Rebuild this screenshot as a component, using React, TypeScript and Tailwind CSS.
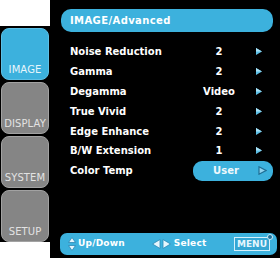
const ROWS = [
  { label: 'Noise Reduction', value: '2' },
  { label: 'Gamma', value: '2' },
  { label: 'Degamma', value: 'Video' },
  { label: 'True Vivid', value: '2' },
  { label: 'Edge Enhance', value: '2' },
  { label: 'B/W Extension', value: '1' },
]

const TABS = ['IMAGE', 'DISPLAY', 'SYSTEM', 'SETUP']

const FONT = "font-['DejaVu_Sans',Verdana,sans-serif]"

function Arrow() {
  return (
    <svg width="6" height="7" viewBox="0 0 6 7">
      <path d="M0 0 L6 3.5 L0 7 Z" fill="#5cbfe6" />
      <path d="M0 0 L6 3.5 L0 3.5 Z" fill="#a8e0f5" />
    </svg>
  )
}

function Tab({ label, active }: { label: string; active: boolean }) {
  return (
    <div
      className={`h-[52px] rounded-[8px] border flex items-end justify-center pb-[4px] ${
        active ? 'bg-[#3cb1dd] border-[#5cc0e6] text-[#e8f6fc]' : 'bg-[#858585] border-[#a2a2a2] text-[#e2e2e2]'
      }`}
    >
      <span className="text-[10px] tracking-[0.1px] leading-none">{label}</span>
    </div>
  )
}

export default function App() {
  return (
    <div className={`w-[280px] h-[258px] flex bg-black ${FONT}`}>
      {/* left tab column */}
      <div className="w-[50px] flex flex-col bg-white">
        <div className="h-[27px]" />
        <div className="flex-1 bg-black pl-[1px] pr-[1px] pt-[2px] flex flex-col gap-[2px]">
          {TABS.map((t) => (
            <Tab key={t} label={t} active={t === 'IMAGE'} />
          ))}
        </div>
        <div className="h-[17px]" />
      </div>

      {/* main panel */}
      <div className="flex-1 flex flex-col pl-[11px] pr-[7px] pt-[9px]">
        <div className="h-[23px] rounded-[10px] bg-[#3cb1dd] flex items-center pl-[9px]">
          <span className="text-white font-bold text-[10px] tracking-[0.4px]">IMAGE/Advanced</span>
        </div>

        <div className="mt-[10px] flex flex-col">
          {ROWS.map((r) => (
            <div key={r.label} className="h-[19.8px] flex items-center text-white font-bold text-[10px]">
              <span className="pl-[9px] flex-1">{r.label}</span>
              <span className="w-[64px] text-center">{r.value}</span>
              <span className="w-[22px] flex justify-center pr-[6px]">
                <Arrow />
              </span>
            </div>
          ))}
          <div className="h-[20px] flex items-center text-white font-bold text-[10px]">
            <span className="pl-[9px] flex-1">Color Temp</span>
            <div className="w-[80px] h-[20px] rounded-[9px] bg-[#3cb1dd] flex items-center">
              <span className="w-[66px] text-center text-[#eef8fc]">User</span>
              <svg width="9" height="9" viewBox="0 0 9 9" className="ml-[-1px]">
                <path d="M1 0.8 L8 4.5 L1 8.2 Z" fill="#8fd3ef" stroke="#1f6f95" strokeWidth="1.2" />
              </svg>
            </div>
          </div>
        </div>

        <div className="flex-1" />

        {/* bottom help bar */}
        <div className="h-[22px] mb-[3px] -ml-[1px] mr-[-4px] rounded-[7px] bg-[#3cb1dd] flex items-center pl-[8px] pr-[7px] text-white font-bold text-[9px]">
          <svg width="8" height="14" viewBox="0 0 8 14">
            <path d="M4 0.5 L7.5 5.5 L0.5 5.5 Z" fill="#e6f6fd" stroke="#2a88b5" strokeWidth="0.8" />
            <path d="M4 13.5 L7.5 8.5 L0.5 8.5 Z" fill="#e6f6fd" stroke="#2a88b5" strokeWidth="0.8" />
          </svg>
          <span className="ml-[2px] tracking-[0.2px]">Up/Down</span>
          <svg width="19" height="10" viewBox="0 0 19 10" className="ml-[27px]">
            <path d="M0.5 5 L8 0.5 L8 9.5 Z" fill="#e6f6fd" stroke="#2a88b5" strokeWidth="0.8" />
            <path d="M18.5 5 L11 0.5 L11 9.5 Z" fill="#e6f6fd" stroke="#2a88b5" strokeWidth="0.8" />
          </svg>
          <span className="ml-[3px] tracking-[0.2px]">Select</span>
          <div className="flex-1" />
          <div className="relative">
            <div className="h-[14px] w-[36px] border border-[#d6f0fb] bg-[#35a6d3] flex items-center justify-center text-[9px] text-[#e6f6fd] leading-none">
              MENU
            </div>
            <div className="absolute -top-[3px] -right-[3px] w-[6px] h-[6px] rounded-full bg-[#1d6f99] border border-[#cfeefa]" />
          </div>
        </div>
      </div>
    </div>
  )
}
